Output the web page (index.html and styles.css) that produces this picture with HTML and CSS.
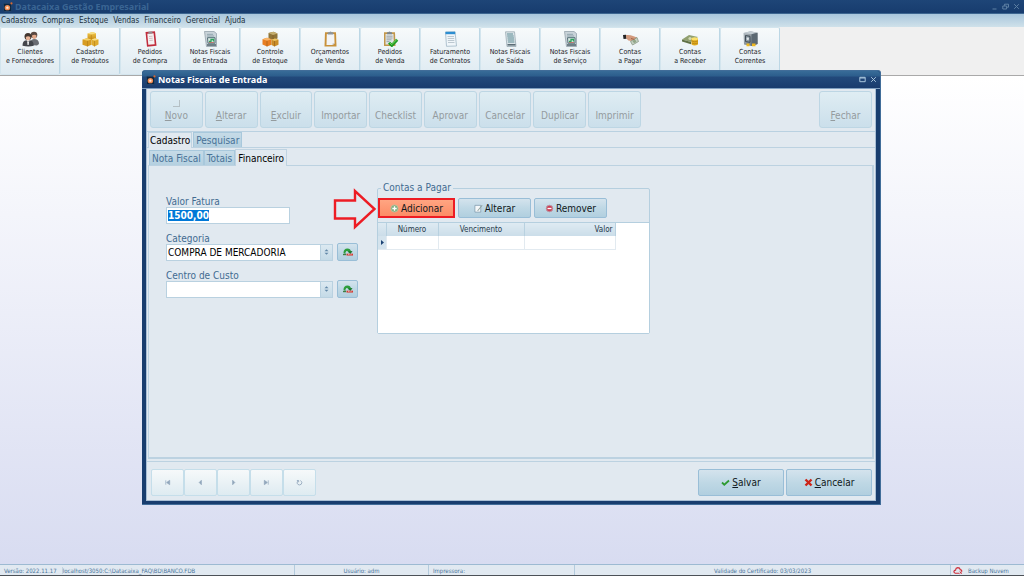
FILE: index.html
```html
<!DOCTYPE html>
<html lang="pt-BR">
<head>
<meta charset="utf-8">
<meta name="viewport" content="width=device-width, initial-scale=1">
<title>Datacaixa Gestão Empresarial</title>
<link rel="stylesheet" href="styles.css">
</head>
<body>
<svg class="sprite" aria-hidden="true">
  <defs>
    <linearGradient id="gold" x1="0" y1="0" x2="0" y2="1"><stop offset="0" stop-color="#f0c94e"/><stop offset="1" stop-color="#c98a12"/></linearGradient>
    <linearGradient id="steel" x1="0" y1="0" x2="1" y2="1"><stop offset="0" stop-color="#b9c2c8"/><stop offset="1" stop-color="#56626c"/></linearGradient>
  </defs>
  <symbol id="logo" viewBox="0 0 11 11"><rect x="0.5" y="1.5" width="9" height="9" rx="1" fill="#0c2640" stroke="#31577f" stroke-width="0.6"/><circle cx="4.8" cy="6.2" r="3" fill="#f08a50"/><circle cx="4.8" cy="6.2" r="1.3" fill="#ffe9d8"/><circle cx="9.3" cy="1.6" r="1.2" fill="#d9682f"/></symbol>
  <symbol id="people" viewBox="0 0 17 16"><circle cx="12" cy="4" r="3.3" fill="#5a4a42"/><path d="M10 4.500q2.500-1.500 4.500 0q0 3.500-2.300 3.500q-2 0-2.200-3.500z" fill="#e3a98a"/><path d="M8 14q0-6 4-6q5 0 5 5l-2 1.500z" fill="#6a6d73"/><circle cx="6" cy="5.500" r="3.500" fill="#42362f"/><path d="M3.800 6q2.300-1.500 4.500 0q0 3.500-2.200 3.500t-2.300-3.500z" fill="#e9b498"/><path d="M.5 14.700q0-5.200 3.800-5.500l1.800 1.500 1.800-1.500q3.800.3 3.800 5.500q-5 1.500-11.200 0z" fill="#43464c"/><path d="M5 10l1.100 1 1.100-1-.5 4h-1.200z" fill="#e8eaec"/></symbol>
  <symbol id="boxes" viewBox="0 0 16 16"><path d="M5 2.500l5-1.500 3.500 1.200v5.500l-5 1.500L5 7.500z" fill="url(#gold)"/><path d="M5 2.500l5-1.500 3.500 1.200-4.700 1.400z" fill="#f7de83"/><path d="M0 8.500l4.500-1.200L9 8.500v5.300L5 15.500l-5-1.700z" fill="#d79c22"/><path d="M0 8.500l4.500-1.200L9 8.500 5 9.800z" fill="#f4d269"/><path d="M9 8.500l3.500-1.200L16 8.500v5l-4 2-3-1.700z" fill="#dfab30"/><path d="M9 8.500l3.500-1.200L16 8.500l-4 1.300z" fill="#f8df85"/><path d="M5 9.800v5.700M12 9.800v5.700M8.800 3.700v4.500" stroke="#a87415" stroke-width=".5"/></symbol>
  <symbol id="stock" viewBox="0 0 16 16"><path d="M6 2l5-1.300 4 1.800v5L10.500 9 6 7.500z" fill="#8f7437"/><path d="M6 2l5-1.300 4 1.800L10.500 4z" fill="#c4ad6d"/><path d="M0 8.200l4.500-1.400L9 8.200v5.500l-4.500 1.800L0 13.500z" fill="#e87e22"/><path d="M0 8.200l4.500-1.400L9 8.200 4.500 9.800z" fill="#f8b66a"/><path d="M9 8.700l3.500-1.200L16 8.700v5l-4 1.700-3-1.500z" fill="#c98d28"/><path d="M9 8.700l3.500-1.200L16 8.700l-4 1.200z" fill="#edc766"/><path d="M4.500 9.800v5.700M12 9.900v5.500M10.500 4v4" stroke="#84531a" stroke-width=".5"/></symbol>
  <symbol id="redclip" viewBox="0 0 16 16"><path d="M3 1l9.500-.7 1.500 14.500-9.500.9z" fill="#c02c3c"/><path d="M4.800 2.800l6.300-.5 1.100 10.900-6.400.6z" fill="#f4f1f2"/><path d="M5.800.8l4-.4.200 2-4 .4z" fill="#8e8e93"/><path d="M6.500 5.500l3.500-.3M6.700 7.500l3.500-.3M6.900 9.500l3.500-.3" stroke="#c3a9ae" stroke-width=".7"/></symbol>
  <symbol id="invoice" viewBox="0 0 16 16"><path d="M2 .5h9.500l2.500 2V15.500H4z" fill="#c9d3d9" stroke="#8b9aa3" stroke-width=".7"/><path d="M4.500 3.300h6M4.500 5h7" stroke="#8ca0aa" stroke-width=".9"/><path d="M5 6.700h7.500v5.500H5.500z" fill="#dcebe6" stroke="#526e77" stroke-width="1"/><path d="M6.500 10.500h2v-2h2.500v2" fill="none" stroke="#2fa45f" stroke-width="1.300"/><path d="M6.500 11.500h5" stroke="#c95b50" stroke-width=".7"/><path d="M4.500 14h9" stroke="#65757e" stroke-width="1.800"/></symbol>
  <symbol id="clip" viewBox="0 0 16 16"><path d="M2.500 1.200h11l.5 14.300H2z" fill="#c8913a"/><path d="M4.300 3h7.400l.4 9.500-2 1.500H4z" fill="#f2f4f6"/><path d="M5.200 1.300h1.600q1.200-1.800 2.400 0h1.600v2.200H5.200z" fill="#8c949b"/><path d="M12.100 12.500l-2 1.500v-1.500z" fill="#a9afb4"/></symbol>
  <symbol id="clipok" viewBox="0 0 16 16"><path d="M1.500 1.200h11l.5 13.800h-11.500z" fill="#c2974a"/><path d="M3 3h8l.4 10.500H3z" fill="#dfe3e3"/><path d="M4.500 1.300h1.300q1.200-1.600 2.400 0h1.300v2h-5z" fill="#7d868d"/><path d="M4 5.200h6M4 7h6M4 8.800h5M4 10.600h3" stroke="#8b989f" stroke-width=".8"/><path d="M6.500 11.700l2.800 2.700L14.700 8.700" fill="none" stroke="#1d9a23" stroke-width="2.900"/><path d="M7 11.500l2.300 2.100L14.300 8.500" fill="none" stroke="#7bda5d" stroke-width="1"/></symbol>
  <symbol id="contract" viewBox="0 0 16 16"><path d="M3 1l9.500-.3L14 15l-10 .3z" fill="#f0f6fa" stroke="#9fb6c5" stroke-width=".8"/><path d="M3 2h9.700" stroke="#2d8ed1" stroke-width="2.400"/><path d="M5 5.500h6.500M5.200 7.500h6.500M5.300 9.500h6.500M5.500 11.500h6.500" stroke="#aebcc5" stroke-width=".8"/></symbol>
  <symbol id="list" viewBox="0 0 16 16"><path d="M3 .8h9L13.500 15.500h-9z" fill="#dce5e9" stroke="#91a2ab" stroke-width=".7"/><path d="M4.500 3h6M4.700 5h6.500M5 7h6.500M5.200 9h6.500M5.400 11h6.500" stroke="#5d8c95" stroke-width="1"/><path d="M5 13.800h8" stroke="#53656e" stroke-width="1.500"/></symbol>
  <symbol id="pay" viewBox="0 0 17 16"><path d="M1 4l3-.3.700 4L1.500 8z" fill="#242426"/><path d="M4 4q4-.5 7 1l4 1.500q0 2-2 1.600L9.500 10Q6 10 4.300 7.500z" fill="#d39a7d"/><path d="M8.500 10.500l6.500-4 1.500 4L10.500 14z" fill="#c5d2c4" stroke="#7d8c77" stroke-width=".7"/><circle cx="12.500" cy="10.300" r="1.600" fill="#91a688"/><path d="M9 7.500l3.500 1" stroke="#a46447" stroke-width="1"/></symbol>
  <symbol id="receive" viewBox="0 0 17 16"><path d="M0 8.500L7 4l9 2-7 5z" fill="#91a070"/><path d="M0 8.500v2l9 2.800v-2.300z" fill="#5f7045"/><circle cx="8" cy="7.500" r="1.600" fill="#d0d8b2"/><path d="M9.500 7.700v5.800q3 1.800 6.500 0V7.700z" fill="#e1ab1e"/><ellipse cx="12.700" cy="7.700" rx="3.300" ry="1.500" fill="#fbe06c"/><path d="M9.500 10q3 1.600 6.500 0M9.500 12q3 1.600 6.500 0" fill="none" stroke="#a87812" stroke-width=".6"/></symbol>
  <symbol id="safe" viewBox="0 0 16 16"><path d="M1 2L8 .2l7 1.500V13l-6 2L1.500 13.500z" fill="url(#steel)"/><path d="M1 2L8 .2l7 1.500-6 1.500z" fill="#c3ccd2"/><path d="M9 3.200l6-1.500V13l-6 2z" fill="#5c6973"/><path d="M3 4.500l4.500.8v6l-4.500-.8z" fill="#8f9ca6" stroke="#39454e" stroke-width=".9"/><circle cx="5.300" cy="7.800" r="1.200" fill="#e0e6ea"/><path d="M4 12.500h3v2.800H4zM9.500 12.500h3.500v2.800H9.500z" fill="#f0b91f"/></symbol>
  <symbol id="finder" viewBox="0 0 12 10"><path d="M1.500 6Q1.500 1.500 5.500 1.500Q8.500 1.500 9 4.500L7 5.500Q6 3.500 4.500 4Q3 5 3.500 7z" fill="#2c9d3c"/><path d="M5.500 4.500L10.500 4 8.500 7z" fill="#16772a"/><path d="M1 7.500h3" stroke="#3d7d45" stroke-width="1.400"/><path d="M4.500 7.600h6.500" stroke="#d23b32" stroke-width="1.900"/><path d="M6 7.300h1.500M8.500 7.300h1" stroke="#fff" stroke-width=".6"/></symbol>
</svg>

<header class="titlebar">
  <svg class="logo"><use href="#logo"/></svg>
  <h1 class="titlebar-name">Datacaixa Gestão Empresarial</h1>
  <div class="window-controls">
    <button aria-label="Minimizar"><svg viewBox="0 0 7 7"><path d="M1.500 6h4"/></svg></button>
    <button aria-label="Restaurar"><svg viewBox="0 0 7 7"><path d="M2.500 2.800V1.200h4v3H4.800M.8 3h3.800v3H.8z"/></svg></button>
    <button aria-label="Fechar aplicação"><svg viewBox="0 0 7 7"><path d="M1.200 1.200l4.600 4.600M5.800 1.200L1.200 5.800"/></svg></button>
  </div>
</header>
<nav class="menubar">
  <a href="#">Cadastros</a><a href="#">Compras</a><a href="#">Estoque</a><a href="#">Vendas</a><a href="#">Financeiro</a><a href="#">Gerencial</a><a href="#">Ajuda</a>
</nav>
<div class="toolbar">
  <button class="tool"><svg><use href="#people"/></svg><span>Clientes<br>e Fornecedores</span></button>
  <button class="tool"><svg><use href="#boxes"/></svg><span>Cadastro<br>de Produtos</span></button>
  <button class="tool"><svg><use href="#redclip"/></svg><span>Pedidos<br>de Compra</span></button>
  <button class="tool"><svg><use href="#invoice"/></svg><span>Notas Fiscais<br>de Entrada</span></button>
  <button class="tool"><svg><use href="#stock"/></svg><span>Controle<br>de Estoque</span></button>
  <button class="tool"><svg><use href="#clip"/></svg><span>Orçamentos<br>de Venda</span></button>
  <button class="tool"><svg><use href="#clipok"/></svg><span>Pedidos<br>de Venda</span></button>
  <button class="tool"><svg><use href="#contract"/></svg><span>Faturamento<br>de Contratos</span></button>
  <button class="tool"><svg><use href="#list"/></svg><span>Notas Fiscais<br>de Saída</span></button>
  <button class="tool"><svg><use href="#invoice"/></svg><span>Notas Fiscais<br>de Serviço</span></button>
  <button class="tool"><svg><use href="#pay"/></svg><span>Contas<br>a Pagar</span></button>
  <button class="tool"><svg><use href="#receive"/></svg><span>Contas<br>a Receber</span></button>
  <button class="tool"><svg><use href="#safe"/></svg><span>Contas<br>Correntes</span></button>
</div>
<main class="desktop"></main>
<footer class="statusbar">
  <div class="status"><span>Versão: 2022.11.17</span><span class="status-path">localhost/3050:C:\Datacaixa_FAQ\BD\BANCO.FDB</span></div>
  <div class="status status-center">Usuário: adm</div>
  <div class="status">Impressora:</div>
  <div class="status status-center">Validade do Certificado: 03/03/2023</div>
  <div class="status status-backup"><svg class="cloud" viewBox="0 0 11 9"><path d="M7 7.500H2.500Q.8 7 1 5.500 1.300 4 2.800 4 3 1.500 5.300 1.300 7.500 1.300 8 3.500 9.800 3.800 9.800 5.500" fill="none" stroke="#cf2e3a" stroke-width="1.300"/><path d="M7.300 5.500l2.500 2.500M9.800 5.500L7.300 8" stroke="#cf2e3a" stroke-width="1.100"/></svg><span>Backup Nuvem</span></div>
</footer>

<section class="dialog" role="dialog" aria-labelledby="dialog-title">
  <div class="dialog-title">
    <svg class="logo"><use href="#logo"/></svg>
    <h2 id="dialog-title">Notas Fiscais de Entrada</h2>
    <div class="window-controls window-controls-active">
      <button aria-label="Maximizar"><svg viewBox="0 0 7 7"><path d="M.8 1.300h5.400v4.400H.8zM.8 2h5.400"/></svg></button>
      <button aria-label="Fechar janela"><svg viewBox="0 0 7 7"><path d="M1.200 1.200l4.600 4.600M5.800 1.200L1.200 5.800"/></svg></button>
    </div>
  </div>
  <div class="dialog-body">
    <div class="actions">
      <div class="action-group">
        <button class="action" disabled><i class="corner"></i><span><u>N</u>ovo</span></button>
        <button class="action" disabled><span><u>A</u>lterar</span></button>
        <button class="action" disabled><span><u>E</u>xcluir</span></button>
        <button class="action" disabled>Importar</button>
        <button class="action" disabled>Checklist</button>
        <button class="action" disabled>Aprovar</button>
        <button class="action" disabled>Cancelar</button>
        <button class="action" disabled>Duplicar</button>
        <button class="action" disabled>Imprimir</button>
      </div>
      <button class="action action-close" disabled><span><u>F</u>echar</span></button>
    </div>
    <div class="tabs" role="tablist">
      <button class="tab tab-active" role="tab" aria-selected="true">Cadastro</button>
      <button class="tab" role="tab">Pesquisar</button>
    </div>
    <div class="page">
      <div class="tabs tabs-inner" role="tablist">
        <button class="tab" role="tab">Nota Fiscal</button>
        <button class="tab" role="tab">Totais</button>
        <button class="tab tab-active" role="tab" aria-selected="true">Financeiro</button>
      </div>
      <div class="panel">
        <form class="fields">
          <div class="field">
            <label for="valor">Valor Fatura</label>
            <div class="amount"><input class="amount-input" id="valor" value="1500,00" size="6"></div>
          </div>
          <div class="field">
            <label for="categoria">Categoria</label>
            <div class="field-row">
              <div class="combo"><select id="categoria"><option>COMPRA DE MERCADORIA</option></select><span class="combo-arrow"><svg viewBox="0 0 5 6"><path d="M.5 2.200L2.500.2l2 2zM.5 3.800l2 2 2-2z"/></svg></span></div>
              <button type="button" class="btn btn-find" aria-label="Buscar categoria"><svg><use href="#finder"/></svg></button>
            </div>
          </div>
          <div class="field">
            <label for="centro">Centro de Custo</label>
            <div class="field-row">
              <div class="combo"><select id="centro"><option></option></select><span class="combo-arrow"><svg viewBox="0 0 5 6"><path d="M.5 2.200L2.500.2l2 2zM.5 3.800l2 2 2-2z"/></svg></span></div>
              <button type="button" class="btn btn-find" aria-label="Buscar centro de custo"><svg><use href="#finder"/></svg></button>
            </div>
          </div>
        </form>
        <fieldset class="payables">
          <legend>Contas a Pagar</legend>
          <svg class="pointer" viewBox="0 0 44 42" aria-hidden="true"><path d="M2 12.500H22V3L41.500 21 22 39V30.500H2z" fill="none" stroke="#ed1c24" stroke-width="2.400"/></svg>
          <div class="payable-actions">
            <button class="btn btn-add"><svg viewBox="0 0 9 9"><circle cx="4.500" cy="4.500" r="3.600" fill="#7fae7c" stroke="#b9c5a5" stroke-width=".8"/><path d="M4.500 2.300v4.400M2.300 4.500h4.400" stroke="#fff" stroke-width="1.300"/></svg>Adicionar</button>
            <button class="btn"><svg viewBox="0 0 10 10"><path d="M1 1.500h6.500v7.500H1z" fill="#f5f8fa" stroke="#7995a8" stroke-width=".8"/><path d="M3.500 7.500L8.700 1l.8.700-5 6.200z" fill="#8ea09a"/></svg>Alterar</button>
            <button class="btn"><svg viewBox="0 0 9 9"><circle cx="4.500" cy="4.500" r="3.300" fill="#cc4057" stroke="#b99aa5" stroke-width=".9"/><path d="M2.500 4.500h4" stroke="#fff" stroke-width="1.300"/></svg>Remover</button>
          </div>
          <div class="grid">
            <table>
              <colgroup><col class="col-mark"><col class="col-number"><col class="col-due"><col class="col-value"></colgroup>
              <thead><tr><th></th><th>Número</th><th>Vencimento</th><th class="right">Valor</th></tr></thead>
              <tbody><tr><td class="marker"><svg viewBox="0 0 3 5"><path d="M0 0l3 2.500L0 5z" fill="#1c4374"/></svg></td><td></td><td></td><td></td></tr></tbody>
            </table>
          </div>
        </fieldset>
      </div>
    </div>
    <div class="dialog-footer">
      <div class="nav-group">
        <button class="nav" disabled aria-label="Primeiro"><svg viewBox="0 0 8 8"><path d="M2 1.500v5M6.500 1.500v5L3 4z"/></svg></button>
        <button class="nav" disabled aria-label="Anterior"><svg viewBox="0 0 8 8"><path d="M5 1.500v5L2.500 4z"/></svg></button>
        <button class="nav" disabled aria-label="Próximo"><svg viewBox="0 0 8 8"><path d="M3 1.500v5L5.500 4z"/></svg></button>
        <button class="nav" disabled aria-label="Último"><svg viewBox="0 0 8 8"><path d="M6 1.500v5M1.500 1.500v5L5 4z"/></svg></button>
        <button class="nav" disabled aria-label="Atualizar"><svg viewBox="0 0 8 8"><path class="line" d="M2.500 2Q1 3 1.300 4.800 2 6.800 4 6.800 6.500 6.600 6.700 4.200 6.500 2.500 5 1.800M1 1.700h2v2"/></svg></button>
      </div>
      <div class="confirm-group">
        <button class="btn btn-confirm"><svg viewBox="0 0 9 9"><path d="M1 4.500l2.300 2.200L8 2.500" fill="none" stroke="#2e9b32" stroke-width="1.800"/></svg><span><u>S</u>alvar</span></button>
        <button class="btn btn-confirm"><svg viewBox="0 0 9 9"><path d="M1.500 1.500l6 6M7.500 1.500l-6 6" stroke="#cc2418" stroke-width="2.400"/></svg><span><u>C</u>ancelar</span></button>
      </div>
    </div>
  </div>
</section>
<script src="app.js"></script>
</body>
</html>
```
FILE: app.js
```js
const amount = document.getElementById("valor");
amount.focus();
amount.select();
```
FILE: styles.css
```css
* { box-sizing: border-box; }
body {
  margin: 0;
  min-height: 100vh;
  display: flex;
  flex-direction: column;
  position: relative;
  font-family: "DejaVu Sans Condensed", "DejaVu Sans", sans-serif;
  font-size: 10px;
  color: #1c2328;
}
button, input, select { font: inherit; color: inherit; margin: 0; }
button { padding: 0; cursor: pointer; }
h1, h2 { margin: 0; font-family: "Noto Sans", sans-serif; font-size: 9px; line-height: 12px; font-weight: bold; }
.sprite { position: absolute; width: 0; height: 0; }
.logo { width: 10px; height: 10px; flex: none; }

.titlebar {
  display: flex;
  align-items: center;
  gap: 2px;
  height: 14px;
  padding: 0 4px 0 3px;
  background: linear-gradient(#1e4577, #173c6e);
  border-bottom: 1px solid #3c6590;
}
.titlebar-name { color: #3a6593; }
.window-controls { display: flex; gap: 4px; margin-left: auto; }
.window-controls button { width: 7px; height: 7px; border: 0; background: none; }
.window-controls svg { display: block; width: 7px; height: 7px; fill: none; stroke: #5e80a4; stroke-width: 1; }
.window-controls-active svg { stroke: #a9c6dc; }

.menubar {
  display: flex;
  align-items: center;
  gap: 5px;
  height: 13px;
  padding: 0 1px;
  font-size: 8px;
  background: linear-gradient(#a9c6dc, #cfe1ea);
}
.menubar a { color: #20303c; text-decoration: none; }

.toolbar {
  display: flex;
  height: 49px;
  background: #f0f0f0;
  border-bottom: 1px solid #a9a9a9;
}
.tool {
  display: flex;
  flex-direction: column;
  align-items: center;
  justify-content: flex-start;
  width: 60px;
  padding: 3px 0 0;
  font-size: 7px;
  line-height: 9px;
  text-align: center;
  white-space: nowrap;
  border: 1px solid #d3e5ee;
  border-right-color: #bcd7e5;
  border-radius: 2px;
  background: linear-gradient(#f7fafb, #dfebf2);
}
.tool svg { width: 17px; height: 16px; margin-bottom: 1px; }

.desktop { flex: 1; background: linear-gradient(#ffffff, #d8dcf1); }

.statusbar {
  display: grid;
  grid-template-columns: 295fr 134fr 146fr 376fr 73fr;
  height: 12px;
  font-size: 6px;
  color: #4a759b;
  background: #e1e9f1;
  border-top: 1px solid #9dbad2;
  border-bottom: 1px solid #4c5157;
}
.status { display: flex; align-items: center; gap: 5px; padding: 0 4px; white-space: nowrap; border-right: 1px solid #b4cbdd; }
.status:last-child { border-right: 0; }
.status-path { border-left: 1px solid #c2d4e2; }
.status-center { justify-content: center; }
.status-backup { padding: 0 2px; }
.cloud { width: 10px; height: 9px; }

.dialog {
  position: absolute;
  top: 70px;
  right: 143px;
  bottom: 71px;
  left: 142px;
  display: flex;
  flex-direction: column;
  padding: 0 4px 3px;
  background: #183d6e;
  border: 1px solid #416d99;
  border-width: 1px 1px 1px 0;
  border-radius: 3px 3px 0 0;
}
.dialog-title {
  display: flex;
  align-items: center;
  gap: 2px;
  height: 18px;
  margin: 0 -4px;
  padding: 0 3px 0 4px;
  border-bottom: 1px solid #7f9fc0;
  border-radius: 3px 3px 0 0;
  background: linear-gradient(#386c98, #2c5d8c 30%, #22497b 35%, #193c6e);
}
.dialog-title h2 { color: #fff; }
.dialog-body { flex: 1; display: flex; flex-direction: column; background: #e1e9f0; border: 1px solid #a9bfd5; border-top: 0; }

.actions { display: flex; justify-content: space-between; padding: 2px 3px 3px; border-bottom: 1px solid #b9d1e1; }
.action-group { display: grid; grid-template-columns: repeat(9, 1fr); gap: 2px; flex: 0 1 491px; }
.action {
  display: flex;
  flex-direction: column;
  justify-content: flex-end;
  align-items: center;
  height: 37px;
  padding-bottom: 5px;
  line-height: 12px;
  color: #949b9e;
  border: 1px solid #bdd6e4;
  border-radius: 3px;
  background: linear-gradient(#dfedf3, #cbdfeb);
}
.action-close { width: 53px; }
.corner { width: 7px; height: 7px; margin-bottom: 3px; border: solid #b5c0c5; border-width: 0 1px 1px 0; }

.tabs { display: flex; align-items: flex-end; height: 16px; padding: 0 1px; gap: 1px; border-bottom: 1px solid #bcd2e1; }
.tab {
  height: 15px;
  padding: 0 2px;
  line-height: 13px;
  white-space: nowrap;
  color: #477196;
  border: 1px solid #a8c8dc;
  border-bottom: 0;
  background: linear-gradient(#c6dbe7, #b4d0e0);
}
.tab-active { height: 16px; padding: 0 1px; margin-bottom: -1px; color: #000; border-color: #bfd3e1; background: #e1e9f0; }
.tabs-inner { height: 18px; gap: 0; padding: 0 1px; }
.tabs-inner .tab-active { height: 17px; padding: 0 2px; }

.page { flex: 1; display: flex; flex-direction: column; margin: 0 1px 2px; }
.panel {
  flex: 1;
  display: flex;
  align-items: flex-start;
  gap: 19px;
  padding: 16px 16px 8px 17px;
  border: 1px solid #bcd2e1;
  border-width: 0 2px 2px 1px;
}
.fields { display: flex; flex-direction: column; gap: 7px; padding-top: 12px; }
.field { display: flex; flex-direction: column; }
.field label { height: 12px; line-height: 15px; color: #426b91; }
.field-row { display: flex; align-items: center; gap: 4px; }
.amount {
  display: flex;
  align-items: center;
  width: 124px;
  height: 17px;
  margin-top: 1px;
  background: #fff;
  border: 1px solid #b9d1e0;
}
.amount-input { width: 100%; height: 13px; padding: 0 0 0 1px; border: 0; outline: 0; font-weight: bold; background: none; }
.amount-input::selection { color: #fff; background: #0078d7; }
.combo { position: relative; width: 167px; height: 17px; }
.combo select {
  display: block;
  width: 100%;
  height: 17px;
  padding: 0 14px 0 1px;
  appearance: none;
  color: #000;
  background: #fff;
  border: 1px solid #b9d1e0;
  border-radius: 0;
}
.combo-arrow {
  position: absolute;
  top: 1px;
  right: 1px;
  bottom: 1px;
  width: 12px;
  display: flex;
  align-items: center;
  justify-content: center;
  border-left: 1px solid #b9d1e0;
  background: linear-gradient(#dce9f1, #c4dae7);
  pointer-events: none;
}
.combo-arrow svg { width: 5px; height: 6px; fill: #6288a8; }

.btn {
  display: flex;
  align-items: center;
  justify-content: center;
  gap: 2px;
  color: #101820;
  border: 1px solid #99bed7;
  border-radius: 2px;
  background: linear-gradient(#d4e3ed, #bfd8e5 50%, #b1cfdf);
}
.btn svg { width: 9px; height: 9px; flex: none; }
.btn-find { width: 21px; height: 18px; }
.btn-find svg { width: 12px; height: 10px; }

.payables {
  position: relative;
  width: 273px;
  margin: 0;
  padding: 4px 0 0;
  min-width: 0;
  border: 1px solid #b5cfdf;
  border-radius: 2px;
}
.payables legend { margin-left: 3px; padding: 0 2px; height: 12px; line-height: 12px; color: #426b91; }
.payable-actions { display: grid; grid-template-columns: 77px 73px 73px; gap: 3px; }
.payable-actions .btn { height: 20px; }
.payable-actions .btn-add { border: 2px solid #ed1c24; border-radius: 0; background: linear-gradient(#ffa582, #fc8c66); }
.pointer { position: absolute; left: -45px; top: -6px; width: 44px; height: 42px; }
.grid { height: 111px; margin-top: 4px; background: #fff; border: 1px solid #b5cfdf; border-width: 1px 0 0; }
.grid table { table-layout: fixed; width: 237px; border-collapse: collapse; font-size: 8px; }
.col-mark { width: 8px; }
.col-number { width: 52px; }
.col-due { width: 86px; }
.col-value { width: 91px; }
.grid th { height: 13px; padding: 0 2px; font-weight: normal; color: #263a4a; background: linear-gradient(#deeaf2, #cbdde9); border-right: 1px solid #b8d1e0; }
.grid .right { text-align: right; }
.grid td { height: 13px; padding: 0; border: 1px solid #e2eaf0; border-width: 0 1px 1px 0; }
.grid .marker { background: #d4e3ed; }
.marker svg { display: block; width: 3px; height: 5px; margin-left: 3px; }

.dialog-footer { display: flex; justify-content: space-between; padding: 7px 3px 4px 4px; border-top: 1px solid #bcd2e1; }
.nav-group { display: flex; }
.nav {
  display: flex;
  align-items: center;
  justify-content: center;
  width: 33px;
  height: 27px;
  border: 1px solid #c5deea;
  border-radius: 2px;
  background: linear-gradient(#f6f9fa, #deebf1);
}
.nav svg { width: 7px; height: 7px; fill: #91a6bb; stroke: #91a6bb; stroke-width: .8; }
.nav .line { fill: none; stroke-width: 1; }
.confirm-group { display: flex; gap: 2px; }
.btn-confirm { width: 86px; height: 27px; }
```
